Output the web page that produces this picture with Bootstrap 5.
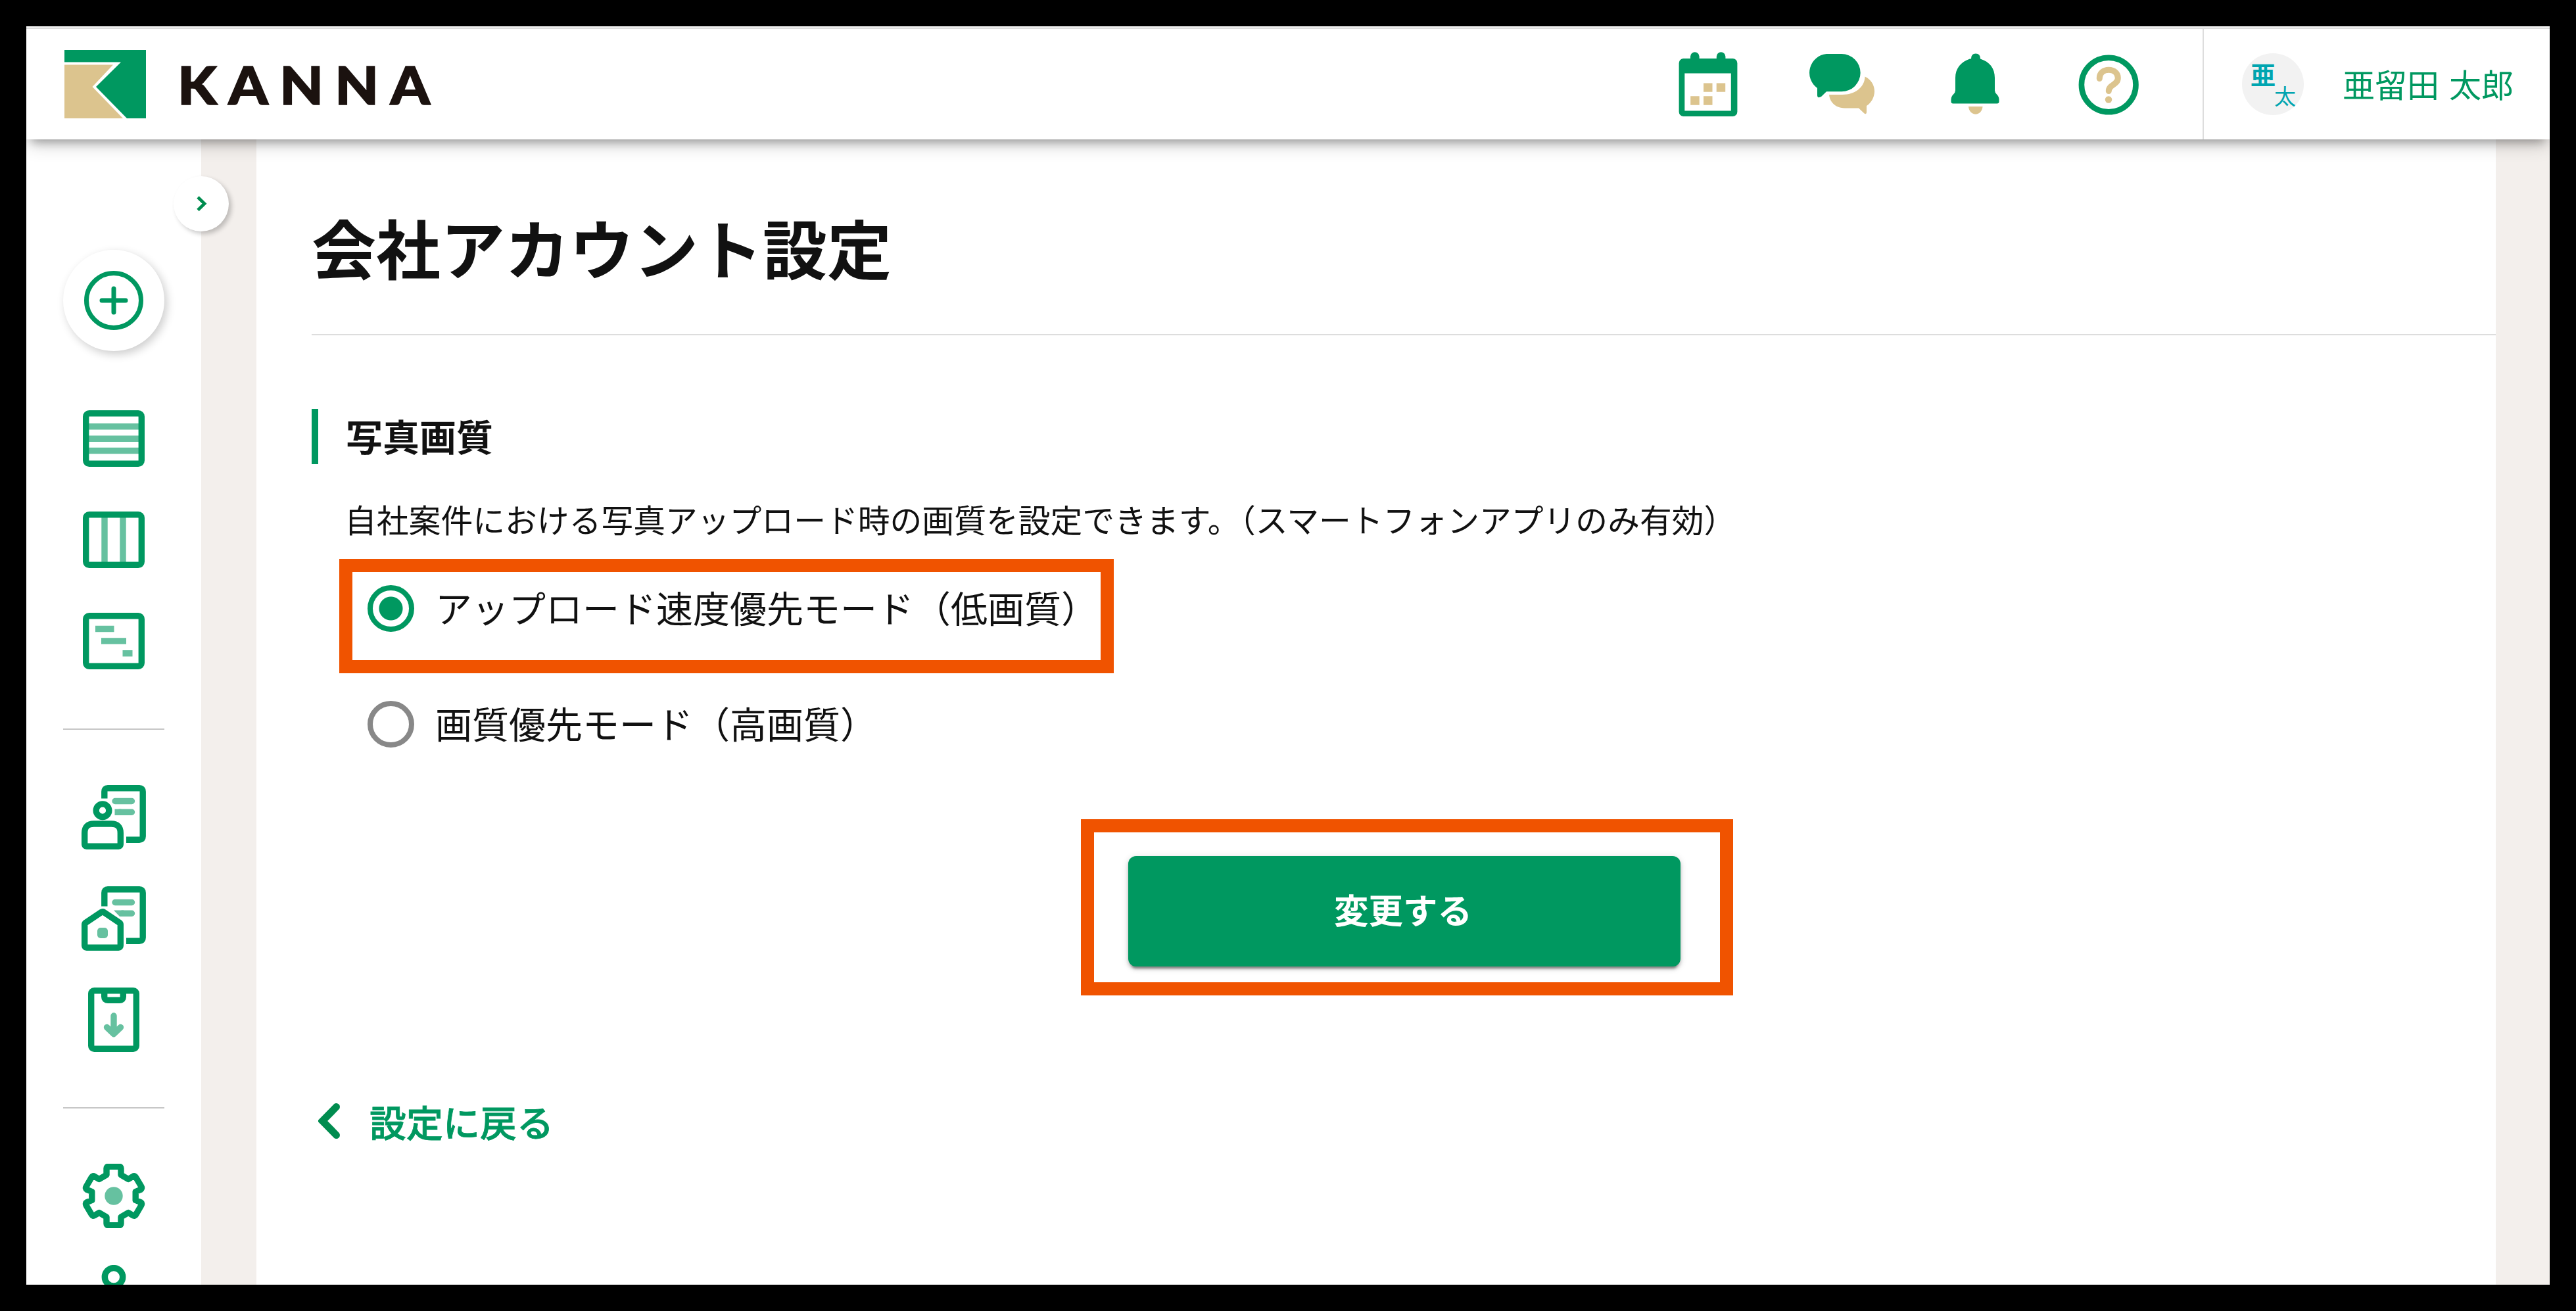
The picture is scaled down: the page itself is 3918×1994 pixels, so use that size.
<!DOCTYPE html>
<html lang="ja">
<head>
  <meta charset="UTF-8" />
  <title>会社アカウント設定 | KANNA</title>
  <link href="https://cdn.jsdelivr.net/npm/bootstrap@5.3.3/dist/css/bootstrap.min.css" rel="stylesheet" />
  <style>
    :root { --kanna: #009860; --kanna-soft: #66c1a0; --sand: #dcc48e; --guide: #f05300; }
    body { background: #000; color: #111; padding: 40px; font-family: "Noto Sans CJK JP", sans-serif; }
    svg { display: block; flex: none; }

    .app-shell { height: 1914px; background: #f3efec; }
    .top-bar {
      height: 170px; border-top: 2px solid #ddd; margin-top: 2px; z-index: 5;
      box-shadow: 0 12px 14px -8px rgba(0, 0, 0, .3), 0 8px 28px -2px rgba(0, 0, 0, .2);
    }
    .brand { padding-left: 58px; }
    .brand-name {
      font: 900 80px/104px Lato, sans-serif; letter-spacing: 16px; color: #1b120f; margin-left: 48px;
      transform: scaleX(1.08); transform-origin: left; -webkit-text-stroke: 1.5px #1b120f;
    }
    .header-icons { margin-right: 50px; }
    .user-menu { width: 528px; border-left: 2px solid #ddd; padding-left: 58px; }
    .avatar { width: 94px; height: 94px; background: #f2f2f2; color: #00a5b0; }
    .avatar span { position: absolute; line-height: 1; }
    .avatar .sei { font-size: 38px; font-weight: 700; left: 13px; top: 12px; }
    .avatar .mei { font-size: 33px; left: 49px; top: 48px; }
    .user-name { font-size: 49px; line-height: 1; color: var(--kanna); margin-left: 59px; padding-bottom: 4px; word-spacing: 4px; }

    .side-bar { width: 266px; padding-top: 168px; }
    .side-toggle { width: 84px; height: 84px; right: -42px; top: 56px; box-shadow: 4px 4px 7px rgba(0, 0, 0, .22); }
    .add-btn { width: 154px; height: 154px; box-shadow: 4px 5px 14px rgba(0, 0, 0, .2); }
    .side-group { gap: 56px; margin: 84px 0; }
    .side-rule { width: 154px; height: 2px; background: #c6c6c6; flex: none; }
    .g { fill: none; stroke: var(--kanna); stroke-width: 9.4; stroke-linejoin: round; }
    .s { fill: none; stroke: var(--kanna-soft); stroke-width: 9.4; }

    .page { width: 3406px; margin-left: 84px; padding: 112px 0 0 84px; }
    .page-title { font-size: 98px; font-weight: 700; line-height: 100px; padding-bottom: 84px; border-bottom: 2px solid #ddd; }
    .section-title {
      height: 84px; margin-top: 112px; border-left: 10px solid var(--kanna); padding-left: 42px;
      font-size: 56px; font-weight: 700; line-height: 80px;
    }
    .section-note { margin: 53px 0 31px 50px; font-size: 48.8px; line-height: 60px; }
    .guide-box { border: 20px solid var(--guide); }
    .guide-radio { width: 1178px; height: 174px; margin-left: 42px; padding: 20px 0 0 23px; }
    .plain-radio { margin: 42px 0 0 42px; padding-left: 43px; }
    .quality.form-check-input { width: 71px; height: 71px; border: 8px solid #888; float: none; margin: 0; flex: none; }
    .quality.form-check-input:checked {
      border-color: var(--kanna); background: radial-gradient(circle, var(--kanna) 17.5px, #fff 18.5px);
    }
    .quality-label { font-size: 56px; line-height: 66px; margin-left: 32px; white-space: nowrap; }
    .submit-row { margin-top: 109px; padding-left: 10px; }
    .guide-submit { padding: 36px 60px 24px 52px; }
    .submit-btn {
      --bs-btn-bg: var(--kanna); --bs-btn-color: #fff; --bs-btn-border-width: 0;
      width: 840px; height: 168px; border-radius: 12px; font-size: 52.5px; font-weight: 700; line-height: 1;
      padding: 0 4px 7px 0;
      box-shadow: 0 7px 3px -4px rgba(0, 0, 0, .3), 0 4px 5px rgba(0, 0, 0, .2), 0 2px 12px rgba(0, 0, 0, .14);
    }
    .back-link { margin: 161px 0 0 10px; gap: 45px; font-size: 56px; font-weight: 500; line-height: 60px; color: var(--kanna); -webkit-text-stroke: .8px var(--kanna); }
  </style>
</head>
<body>

<div class="app-shell overflow-hidden d-flex flex-column">
  <div class="bg-white">
    <header class="top-bar bg-white d-flex position-relative mb-0">
      <div class="brand d-flex align-items-center me-auto">
        <svg width="124" height="104" viewBox="0 0 124 104">
          <path fill="#009860" d="M0 0H124V104H95L48 56 86 18.500H0z"/>
          <path fill="#dcc48e" d="M0 22.500H74L42.500 56 89 104H0z"/>
        </svg>
        <span class="brand-name">KANNA</span>
      </div>

      <!-- カレンダー / チャット / 通知 / ヘルプ -->
      <svg class="header-icons" width="760" height="168" viewBox="2540 44 760 168">
        <g fill="#009860">
          <path fill-rule="evenodd" d="M2560 89h11v-3a6.800 6.800 0 0 1 13.600 0v3h26.200v-3a6.800 6.800 0 0 1 13.600 0v3h11a7 7 0 0 1 7 7v74a7 7 0 0 1-7 7h-74.800a7 7 0 0 1-7-7V96a7 7 0 0 1 6.400-7zM2562.300 111.500v57h70.500v-57z"/>
          <path d="M2778 82h23a28.600 28.600 0 0 1 0 57.300h-23l-8 7.700q-6 3-6-2v-11a28.800 28.800 0 0 1 14-52z"/>
          <path d="M2998 89.500q0-8 7-8t7 8c14 4.500 22 14 22 29v19q0 3 3 6 3.500 3.500 3.500 8v3a3 3 0 0 1-3 3h-67a3 3 0 0 1-3-3v-3q0-4.500 3.500-8 3-3 3-6v-19c0-15 9-24.500 22-29z"/>
        </g>
        <g fill="#dcc48e">
          <path d="M2591 126.500h13.500v13.300H2591zM2610.700 126.500h13.500v13.300h-13.500zM2571.200 146.200h13.500v13.500h-13.500zM2591 146.200h13.500v13.500H2591z"/>
          <path d="M2836.500 116.500C2846 121 2851.300 130 2851 139.500c-.3 9-5 17-12 21.500v10q-.5 3.500-3.500 1.500L2827 164.500h-21c-13 0-23-8-24-20.500h20c19 0 34-11 34.500-27.500z"/>
          <path d="M2994 162h21.500c-.5 7-5 11.700-10.700 11.700S2994.500 169 2994 162z"/>
          <circle cx="3207" cy="151.500" r="5.200"/>
        </g>
        <circle cx="3207.200" cy="129" r="41.300" fill="none" stroke="#009860" stroke-width="8.600"/>
        <path d="M3193.300 119.500v-1c0-7 6-12.300 14-12.300s14 5.300 14 12.300c0 11-14 10-14 20" fill="none" stroke="#dcc48e" stroke-width="9" stroke-linecap="round"/>
      </svg>
      <div class="user-menu d-flex align-items-center">
        <div class="avatar rounded-circle position-relative flex-shrink-0">
          <span class="sei">亜</span><span class="mei">太</span>
        </div>
        <span class="user-name text-nowrap">亜留田 太郎</span>
      </div>
    </header>
  </div>

  <div class="d-flex flex-grow-1">
    <aside class="side-bar bg-white d-flex flex-column align-items-center position-relative flex-shrink-0">
      <button type="button" class="side-toggle btn bg-white border-0 rounded-circle p-0 position-absolute d-flex align-items-center justify-content-center">
        <svg width="18" height="26" viewBox="0 0 18 26"><path d="M4 3l10 9.700L4 22.500" fill="none" stroke="#008c4f" stroke-width="4.800"/></svg>
      </button>
      <button type="button" class="add-btn btn bg-white border-0 rounded-circle p-0 flex-shrink-0 d-flex align-items-center justify-content-center">
        <svg width="90" height="90" viewBox="0 0 90 90">
          <circle cx="45" cy="45" r="41.500" fill="none" stroke="#009860" stroke-width="7"/>
          <path d="M27 45h36M45 27v36" stroke="#009860" stroke-width="7" stroke-linecap="round"/>
        </svg>
      </button>

      <nav class="side-group d-flex flex-column">
        <svg width="98" height="98" viewBox="0 0 98 98">
          <path class="s" d="M8 30.700h82M8 49.200h82M8 67.500h82"/>
          <rect class="g" x="6.700" y="10.700" width="84.600" height="76.600" rx="5"/>
        </svg>
        <svg width="98" height="98" viewBox="0 0 98 98">
          <path class="s" d="M35 12v74M63 12v74"/>
          <rect class="g" x="6.700" y="10.700" width="84.600" height="76.600" rx="5"/>
        </svg>
        <svg width="98" height="98" viewBox="0 0 98 98">
          <path class="s" d="M21 30.500h28.500M30 49h38M62.500 67.700h15"/>
          <rect class="g" x="6.700" y="10.700" width="84.600" height="76.600" rx="5"/>
        </svg>
      </nav>
      <div class="side-rule"></div>
      <nav class="side-group d-flex flex-column">
        <svg width="98" height="98" viewBox="0 0 98 98">
          <path class="s" stroke-linecap="round" d="M51 24.500h25.500M58 41.300h18.500"/>
          <path class="s" d="M50.500 41.300h10"/>
          <path class="g" d="M34.800 20.500V10q0-5.200 5.200-5.200h48q5.200 0 5.200 5.200v68q0 5.200-5.200 5.200H68"/>
          <circle class="g" cx="32" cy="38.700" r="9.800"/>
          <path class="g" d="M4.700 73q0-14 14-14h26.600q14 0 14 14v17.300q0 3-3 3H7.700q-3 0-3-3z"/>
        </svg>
        <svg width="98" height="98" viewBox="0 0 98 98">
          <path class="s" stroke-linecap="round" d="M51 24.500h25.500M62 41.300h14.500"/>
          <path fill="#66c1a0" d="M49 36.600h15V46h-6z"/>
          <path class="g" d="M34.800 30.500V10q0-5.200 5.200-5.200h48q5.200 0 5.200 5.200v68q0 5.200-5.200 5.200H68"/>
          <path class="g" d="M4.700 58.500q0-2 1.500-3L30 39.500q2-1.300 4 0l23.800 16q1.500 1 1.500 3v31.800q0 3-3 3H7.700q-3 0-3-3z"/>
          <rect x="24" y="63" width="16" height="16" rx="5" fill="#66c1a0"/>
        </svg>
        <svg width="98" height="98" viewBox="0 0 98 98">
          <rect class="g" x="14.700" y="4.700" width="68.600" height="88.600" rx="4.500"/>
          <path class="g" d="M34.700 6v8q0 5.300 5.300 5.300h18q5.300 0 5.300-5.300V6"/>
          <path class="s" stroke-linecap="round" stroke-linejoin="round" d="M49 43v26M38.500 60.500L49 70.500l10.500-10"/>
        </svg>
      </nav>
      <div class="side-rule"></div>
      <nav class="side-group d-flex flex-column mb-0">
        <svg width="98" height="98" viewBox="-49 -49 98 98">
          <path class="g" d="M-11-32V-42q0-2.700 2.700-2.700H8.300Q11-44.700 11-42V-32L22.200-25.500 29-29.500q3-1.800 4.700 1.200l8.200 14q1.700 3-1 4.700L33.200-6.500V6.500L40.900 9.600q2.700 1.700 1 4.700l-8.200 14q-1.700 3-4.700 1.200L22.200 25.500 11 32V42q0 2.700-2.700 2.700H-8.300Q-11 44.700-11 42V32L-22.200 25.500-29 29.500q-3 1.800-4.700-1.200l-8.200-14q-1.700-3 1-4.700L-33.200 6.500V-6.500L-40.900-9.600q-2.700-1.700-1-4.700l8.200-14q1.700-3 4.700-1.200L-22.200-25.500z"/>
          <circle r="13.700" fill="#66c1a0"/>
        </svg>
        <svg width="98" height="98" viewBox="0 0 98 98">
          <circle class="g" cx="49" cy="18.300" r="13.700"/>
          <path class="g" d="M14.700 93V68q0-14 14-14h40.600q14 0 14 14v25z"/>
        </svg>
      </nav>
    </aside>

    <main class="page bg-white flex-shrink-0">
      <h1 class="page-title mb-0">会社アカウント設定</h1>

      <form>
        <h2 class="section-title mb-0">写真画質</h2>
        <p class="section-note">自社案件における写真アップロード時の画質を設定できます。（スマートフォンアプリのみ有効）</p>

        <div class="guide-box guide-radio d-flex align-items-start">
          <input class="quality form-check-input" type="radio" name="quality" id="quality-low" checked />
          <label class="quality-label" for="quality-low">アップロード速度優先モード（低画質）</label>
        </div>
        <div class="plain-radio d-flex align-items-start">
          <input class="quality form-check-input" type="radio" name="quality" id="quality-high" />
          <label class="quality-label" for="quality-high">画質優先モード（高画質）</label>
        </div>

        <div class="submit-row d-flex justify-content-center">
          <div class="guide-box guide-submit">
            <button type="submit" class="submit-btn btn d-block">変更する</button>
          </div>
        </div>
      </form>

      <a href="#" class="back-link d-inline-flex align-items-center text-decoration-none">
        <svg width="33" height="54" viewBox="0 0 33 54"><path d="M27.500 5.500L6.500 27l21 21.500" fill="none" stroke="#008c4f" stroke-width="11" stroke-linecap="round"/></svg>
        <span>設定に戻る</span>
      </a>
    </main>
  </div>
</div>

<script src="https://cdn.jsdelivr.net/npm/bootstrap@5.3.3/dist/js/bootstrap.bundle.min.js"></script>
</body>
</html>
